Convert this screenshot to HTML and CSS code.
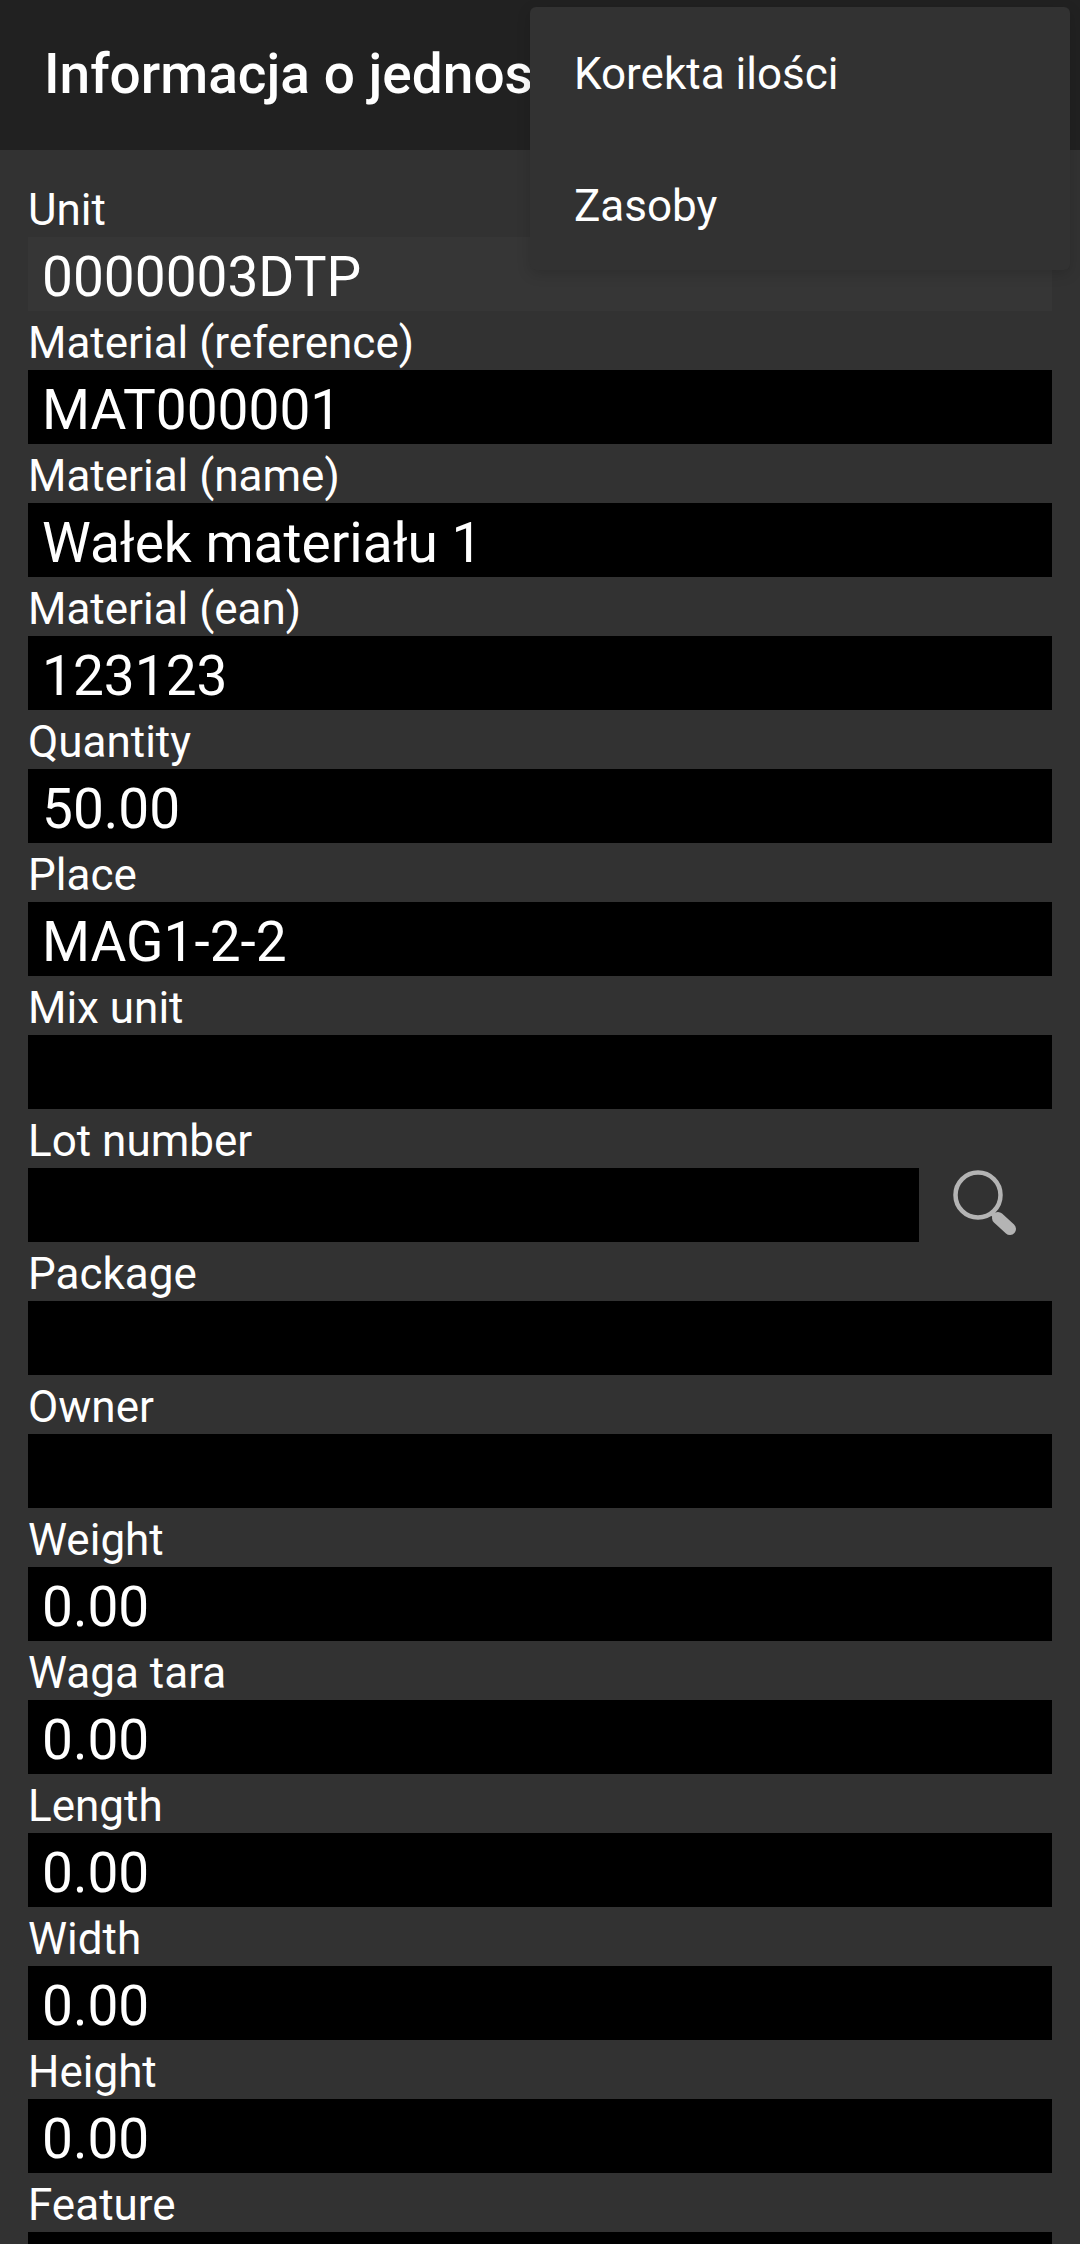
FILE: index.html
```html
<!DOCTYPE html>
<html lang="pl">
<head>
  <meta charset="UTF-8">
  <meta name="viewport" content="width=device-width, initial-scale=1.0">
  <title>Informacja o jednostce</title>
  <link rel="stylesheet" href="styles.css">
</head>
<body>
  <header class="toolbar">
    <h1>Informacja o jednostce</h1>
  </header>

  <div class="menu">
    <div class="menu-item">Korekta ilości</div>
    <div class="menu-item">Zasoby</div>
  </div>

  <form class="fields">
    <label>Unit</label>
    <div class="value readonly">0000003DTP</div>

    <label>Material (reference)</label>
    <div class="value">MAT000001</div>

    <label>Material (name)</label>
    <div class="value">Wałek materiału 1</div>

    <label>Material (ean)</label>
    <div class="value">123123</div>

    <label>Quantity</label>
    <div class="value">50.00</div>

    <label>Place</label>
    <div class="value">MAG1-2-2</div>

    <label>Mix unit</label>
    <div class="value"></div>

    <label>Lot number</label>
    <div class="value-row">
      <div class="value"></div>
      <svg class="search" width="133" height="74" viewBox="0 0 133 74" aria-hidden="true">
        <circle cx="59" cy="27" r="22.5" fill="none" stroke="#b4b4b4" stroke-width="4.5"/>
        <path d="M72 44 L77 49" fill="none" stroke="#b4b4b4" stroke-width="5"/>
        <path d="M79 50 L91 61" fill="none" stroke="#b4b4b4" stroke-width="12" stroke-linecap="round"/>
      </svg>
    </div>

    <label>Package</label>
    <div class="value"></div>

    <label>Owner</label>
    <div class="value"></div>

    <label>Weight</label>
    <div class="value">0.00</div>

    <label>Waga tara</label>
    <div class="value">0.00</div>

    <label>Length</label>
    <div class="value">0.00</div>

    <label>Width</label>
    <div class="value">0.00</div>

    <label>Height</label>
    <div class="value">0.00</div>

    <label>Feature</label>
    <div class="value"></div>
  </form>
</body>
</html>
```

FILE: styles.css
```css
html, body {
  margin: 0;
  padding: 0;
  height: 2244px;
  overflow: hidden;
}
body {
  position: relative;
  font-family: Roboto, "Liberation Sans", sans-serif;
  background-color: #323232;
  color: #fff;
}
.toolbar {
  height: 150px;
  padding-left: 44px;
  display: flex;
  align-items: center;
  background-color: #212121;
}
.toolbar h1 {
  width: 486px;
  margin: 0 0 2px;
  font-size: 55px;
  font-weight: 500;
  white-space: nowrap;
  overflow: hidden;
}
.menu {
  position: absolute;
  top: 7px;
  left: 530px;
  width: 540px;
  height: 263px;
  padding: 0 44px;
  box-sizing: border-box;
  display: flex;
  flex-direction: column;
  justify-content: center;
  background-color: #323232;
  border-radius: 6px;
  box-shadow: 0 4px 14px rgba(0,0,0,0.15);
}
.menu-item {
  height: 132px;
  line-height: 134px;
  font-size: 44px;
}
.fields {
  display: block;
  padding: 28px 28px 0;
}
label {
  display: block;
  height: 59px;
  line-height: 64px;
  font-size: 44px;
}
.value {
  height: 74px;
  line-height: 80px;
  padding-left: 14px;
  font-size: 55px;
  background-color: #000;
}
.value.readonly {
  background-color: #363636;
}
.value-row {
  display: flex;
}
.value-row .value {
  flex: 0 0 891px;
  padding: 0;
}
.search {
  flex: none;
}
```
